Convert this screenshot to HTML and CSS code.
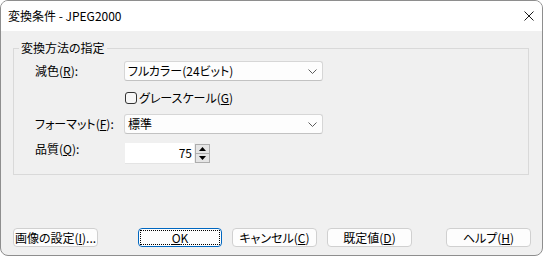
FILE: index.html
```html
<!DOCTYPE html>
<html lang="ja">
<head>
<meta charset="utf-8">
<title>変換条件 - JPEG2000</title>
<link rel="stylesheet" href="styles.css">
</head>
<body>
<div class="window">
  <div class="titlebar">
    <span class="title">変換条件 - JPEG2000</span>
    <svg class="close" width="10" height="10" viewBox="0 0 10 10"><path d="M0.5 0.5 L9.5 9.5 M9.5 0.5 L0.5 9.5" stroke="#1a1a1a" stroke-width="1" fill="none"/></svg>
  </div>
  <div class="body">
    <fieldset class="group">
      <legend class="legend">変換方法の指定</legend>
      <div class="rows">
        <div class="row r1">
          <span class="label">減色(<u>R</u>):</span>
          <div class="combo"><span>フルカラー(24ビット)</span><svg class="chev" width="9" height="5" viewBox="0 0 9 5"><path d="M0.5 0.5 L4.5 4.5 L8.5 0.5" stroke="#5c5c5c" fill="none" stroke-width="1"/></svg></div>
        </div>
        <div class="row r2">
          <span class="label"></span>
          <div class="check"><span class="box"></span><span>グレースケール(<u>G</u>)</span></div>
        </div>
        <div class="row r3">
          <span class="label">フォーマット(<u>F</u>):</span>
          <div class="combo"><span>標準</span><svg class="chev" width="9" height="5" viewBox="0 0 9 5"><path d="M0.5 0.5 L4.5 4.5 L8.5 0.5" stroke="#5c5c5c" fill="none" stroke-width="1"/></svg></div>
        </div>
        <div class="row r4">
          <span class="label lab-top">品質(<u>Q</u>):</span>
          <div class="spin">
            <div class="spin-edit">75</div>
            <div class="spin-btns">
              <div class="spin-btn"><svg width="7" height="4" viewBox="0 0 7 4"><path d="M3.5 0 L7 4 L0 4 Z" fill="#000"/></svg></div>
              <div class="spin-btn"><svg width="7" height="4" viewBox="0 0 7 4"><path d="M0 0 L7 0 L3.5 4 Z" fill="#000"/></svg></div>
            </div>
          </div>
        </div>
      </div>
    </fieldset>
    <div class="buttons">
      <div class="btn b1">画像の設定(<u>I</u>)...</div>
      <div class="btn btn-default b2"><span class="focus"><u>O</u>K</span></div>
      <div class="btn b3">キャンセル(<u>C</u>)</div>
      <div class="btn b4">既定値(<u>D</u>)</div>
      <div class="btn b5">ヘルプ(<u>H</u>)</div>
    </div>
  </div>
</div>
</body>
</html>
```

FILE: styles.css
```css
html, body {
  margin: 0;
  padding: 0;
  background: #ffffff;
}
body {
  font-family: "Noto Sans CJK JP", "Noto Sans", sans-serif;
  font-feature-settings: "palt";
  font-size: 12px;
  line-height: 16px;
  color: #000;
}
.window {
  width: 543px;
  height: 256px;
  box-sizing: border-box;
  border: 1px solid #8e8e8e;
  border-radius: 8px;
  overflow: hidden;
  display: flex;
  flex-direction: column;
  background: #f0f0f0;
}
.titlebar {
  height: 30px;
  flex: none;
  background: #ffffff;
  display: flex;
  align-items: center;
  padding-left: 7px;
  padding-right: 8px;
}
.title {
  flex: 1;
  font-size: 12px;
}
.close {
  display: block;
  margin-right: 0px;
  margin-top: 0px;
}
.body {
  flex: 1;
  display: flex;
  flex-direction: column;
}
.group {
  margin: 9px 0 0 12px;
  width: 516px;
  box-sizing: border-box;
  border: 1px solid #d9d9d9;
  padding: 0 0 10px 0;
  min-width: 0;
}
.legend {
  margin-left: 5px;
  padding: 0 2px;
  line-height: 16px;
}
.rows {
  display: flex;
  flex-direction: column;
  padding-left: 21px;
}
.row {
  display: flex;
  align-items: center;
}
.label {
  width: 89px;
  flex: none;
}
.r1 { margin-top: 5px; height: 20px; }
.r2 { margin-top: 10px; height: 14px; }
.r3 { margin-top: 9px; height: 20px; }
.r4 { margin-top: 9px; height: 21px; align-items: flex-start; }
.lab-top { margin-top: -2px; }
.combo {
  width: 199px;
  height: 20px;
  box-sizing: border-box;
  background: #fdfdfd;
  border: 1px solid #d6d6d6;
  border-bottom-color: #c2c2c2;
  border-radius: 3px;
  display: flex;
  align-items: center;
  padding: 0 4px 0 3px;
}
.combo span { flex: 1; }
.chev { display: block; margin-right: 1px; }
.check {
  display: flex;
  align-items: center;
  margin-left: 1px;
}
.box {
  width: 12px;
  height: 12px;
  box-sizing: border-box;
  border: 1px solid #333;
  border-radius: 3px;
  background: #f7f7f7;
  margin-right: 2px;
}
.spin {
  display: flex;
  height: 21px;
  margin-left: 1px;
}
.spin-edit {
  width: 69px;
  box-sizing: border-box;
  background: #fff;
  border-bottom: 1px solid #e4e4e4;
  text-align: right;
  padding-right: 2px;
  line-height: 20px;
}
.spin-btns {
  display: flex;
  flex-direction: column;
  padding: 1px 0;
  margin-left: 1px;
}
.spin-btn {
  width: 15px;
  height: 10px;
  box-sizing: border-box;
  border: 1px solid #adadad;
  background: #e5e5e5;
  display: flex;
  align-items: center;
  justify-content: center;
}
.spin-btn + .spin-btn { border-top: none; height: 9px; }
.buttons {
  margin-top: auto;
  margin-bottom: 8px;
  display: flex;
  padding-left: 12px;
}
.btn {
  width: 85px;
  height: 19px;
  box-sizing: border-box;
  background: #fdfdfd;
  border: 1px solid #d0d0d0;
  border-radius: 4px;
  display: flex;
  align-items: center;
  justify-content: center;
  line-height: 16px;
}
.b2 { margin-left: 40px; width: 84px; }
.b3 { margin-left: 10px; }
.b4 { margin-left: 10px; }
.b5 { margin-left: 34px; }
.btn-default {
  border: 1px solid #0067c0;
  padding: 1px;
}
.focus {
  flex: 1;
  align-self: stretch;
  border: 1px dotted #000;
  display: flex;
  align-items: center;
  justify-content: center;
}
u { text-decoration: underline; text-underline-offset: 1px; }
```
